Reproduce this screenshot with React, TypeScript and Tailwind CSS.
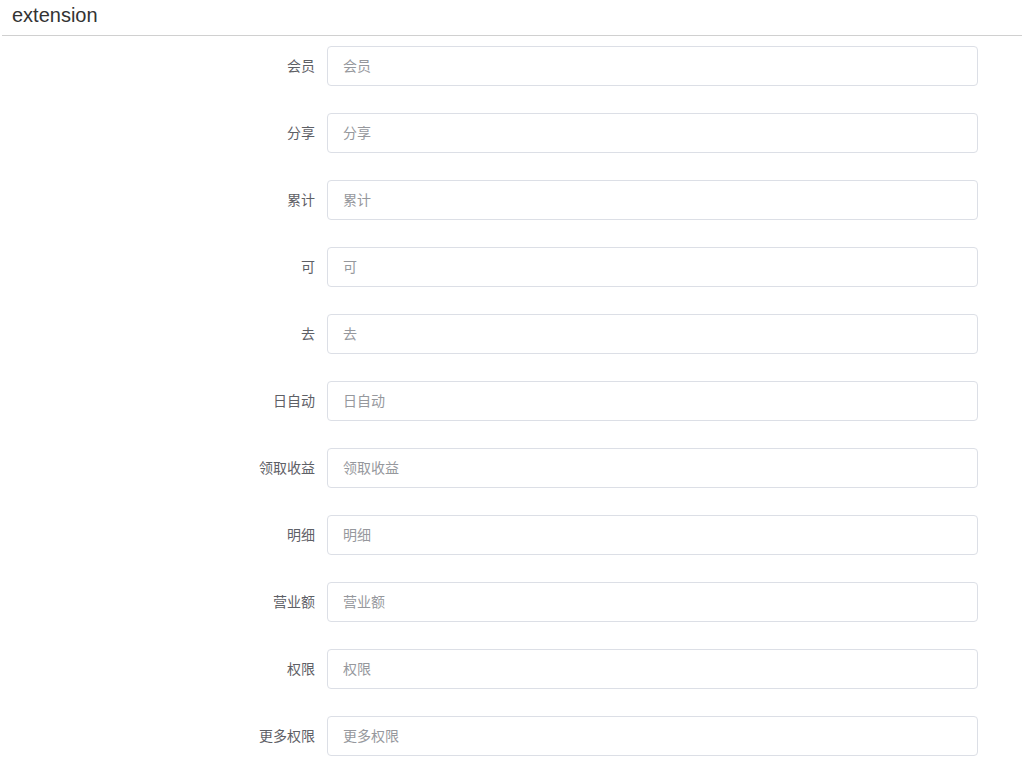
const FIELDS = ['会员', '分享', '累计', '可', '去', '日自动', '领取收益', '明细', '营业额', '权限', '更多权限'];

export default function App() {
  return (
    <div
      className="min-h-screen bg-white pl-[2px]"
      style={{ fontFamily: '"Helvetica Neue", "Liberation Sans", "Noto Sans CJK SC", sans-serif' }}
    >
      <div className="h-[36px] border-b border-[#d0d0d0] pl-[10px] text-[20px] leading-[30px] text-[#333]">extension</div>
      <div className="flex flex-col gap-[27px] pt-[10px]">
        {FIELDS.map((f) => (
          <div key={f} className="flex items-center">
            <label className="w-[325px] pr-[12px] text-right text-[14px] text-[#5e6066]">{f}</label>
            <input
              placeholder={f}
              className="h-[40px] w-[651px] rounded-[4px] border border-[#dcdfe6] bg-white px-[15px] text-[14px] text-[#606266] outline-none placeholder:text-[#96989d]"
            />
          </div>
        ))}
      </div>
    </div>
  );
}
